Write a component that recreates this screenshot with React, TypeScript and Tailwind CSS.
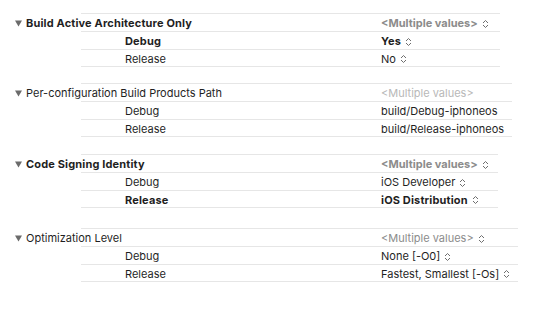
import React from 'react'

type Row = { name: string; value: string; bold?: boolean; chevron?: boolean }

type Section = {
  title: string
  bold: boolean
  width: string
  spacing: string
  multi: string
  multiChevron: boolean
  rows: Row[]
}

const sections: Section[] = [
  {
    title: 'Build Active Architecture Only',
    bold: true,
    width: 'w-[419px]',
    spacing: 'mt-[13px]',
    multi: 'text-[#8c8c8c] font-bold',
    multiChevron: true,
    rows: [
      { name: 'Debug', value: 'Yes', bold: true, chevron: true },
      { name: 'Release', value: 'No', chevron: true },
    ],
  },
  {
    title: 'Per-configuration Build Products Path',
    bold: false,
    width: 'w-[431px]',
    spacing: 'mt-[16px]',
    multi: 'text-[#b8b8b8]',
    multiChevron: false,
    rows: [
      { name: 'Debug', value: 'build/Debug-iphoneos' },
      { name: 'Release', value: 'build/Release-iphoneos' },
    ],
  },
  {
    title: 'Code Signing Identity',
    bold: true,
    width: 'w-[417px]',
    spacing: 'mt-[17px]',
    multi: 'text-[#8c8c8c] font-bold',
    multiChevron: true,
    rows: [
      { name: 'Debug', value: 'iOS Developer', chevron: true },
      { name: 'Release', value: 'iOS Distribution', bold: true, chevron: true },
    ],
  },
  {
    title: 'Optimization Level',
    bold: false,
    width: 'w-[437px]',
    spacing: 'mt-[20px]',
    multi: 'text-[#8c8c8c]',
    multiChevron: true,
    rows: [
      { name: 'Debug', value: 'None [-O0]', chevron: true },
      { name: 'Release', value: 'Fastest, Smallest [-Os]', chevron: true },
    ],
  },
]

const Stepper = () => (
  <svg width="7" height="10" viewBox="0 0 7 10" className="ml-[4px] shrink-0">
    <path d="M1 4 L3.5 1.5 L6 4" fill="none" stroke="#6e6e6e" strokeWidth="1" />
    <path d="M1 6 L3.5 8.5 L6 6" fill="none" stroke="#6e6e6e" strokeWidth="1" />
  </svg>
)

const Disclosure = () => (
  <svg width="7" height="7" viewBox="0 0 7 7" className="mr-[4px] shrink-0">
    <path d="M0 0.5 L7 0.5 L3.5 6.5 Z" fill="#6b6b6b" />
  </svg>
)

export default function App() {
  return (
    <div className="w-[533px] h-[310px] bg-white text-[11px] text-[#1f1f1f] font-['Inter','Liberation_Sans',sans-serif] leading-none overflow-hidden">
      {sections.map((s) => (
        <div key={s.title} className={s.spacing}>
          <div className="flex h-[18px]">
            <div
              className={`w-[81px] shrink-0 flex items-center pt-[2px] pl-[15px] whitespace-nowrap ${
                s.bold ? 'font-bold tracking-[0.15px]' : ''
              }`}
            >
              <Disclosure />
              <span>{s.title}</span>
            </div>
            <div className={`${s.width} border-t border-[#e6e6e6] flex items-center pt-[2px]`}>
              <div className="w-[300px] shrink-0" />
              <div className={`flex items-center whitespace-nowrap ${s.multi}`}>
                <span>&lt;Multiple values&gt;</span>
                {s.multiChevron && <Stepper />}
              </div>
            </div>
          </div>
          {s.rows.map((r, i) => (
            <div key={r.name} className="flex h-[18px]">
              <div className="w-[81px] shrink-0" />
              <div
                className={`${s.width} border-t border-[#e6e6e6] flex items-center pt-[2px] whitespace-nowrap ${
                  i === s.rows.length - 1 ? 'border-b' : ''
                } ${r.bold ? 'font-bold tracking-[0.15px]' : ''}`}
              >
                <div className="w-[300px] shrink-0 pl-[44px]">{r.name}</div>
                <div className="flex items-center">
                  <span>{r.value}</span>
                  {r.chevron && <Stepper />}
                </div>
              </div>
            </div>
          ))}
        </div>
      ))}
    </div>
  )
}
